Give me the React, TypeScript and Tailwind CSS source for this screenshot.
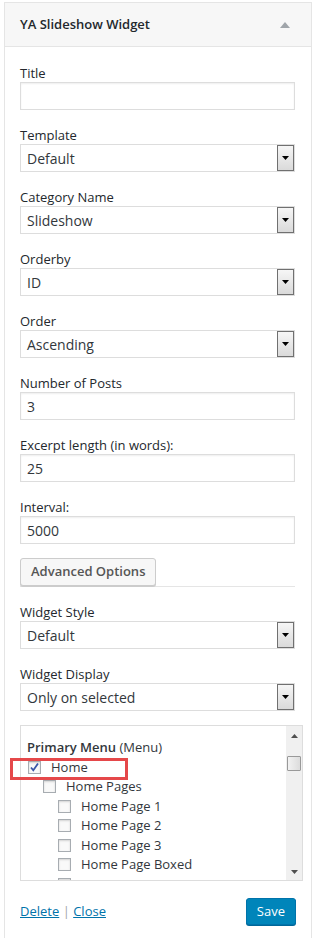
import React from "react";

const fields: { label: string; kind: "input" | "select"; value: string }[] = [
  { label: "Title", kind: "input", value: "" },
  { label: "Template", kind: "select", value: "Default" },
  { label: "Category Name", kind: "select", value: "Slideshow" },
  { label: "Orderby", kind: "select", value: "ID" },
  { label: "Order", kind: "select", value: "Ascending" },
  { label: "Number of Posts", kind: "input", value: "3" },
  { label: "Excerpt length (in words):", kind: "input", value: "25" },
  { label: "Interval:", kind: "input", value: "5000" },
];

// last row is cut off by the box edge, only its checkbox peeks in
const menuItems: { label: string; depth: number; checked?: boolean }[] = [
  { label: "Home", depth: 0, checked: true },
  { label: "Home Pages", depth: 1 },
  { label: "Home Page 1", depth: 2 },
  { label: "Home Page 2", depth: 2 },
  { label: "Home Page 3", depth: 2 },
  { label: "Home Page Boxed", depth: 2 },
  { label: "", depth: 2 },
];

export default function App() {
  return (
    <div className="min-h-[938px] bg-white font-['Open_Sans',sans-serif] text-[13px] text-[#23282d]">
      <div className="relative ml-[4px] mt-[2px] w-[308px] border-x border-t border-[#e5e5e5] bg-white">
        {/* Header */}
        <div className="flex h-[44px] items-center justify-between border-b border-[#e5e5e5] bg-[#f7f7f7] pl-[15px] pr-[21px]">
          <h3 className="text-[13px] font-semibold text-[#23282d]">YA Slideshow Widget</h3>
          <svg width="10" height="6" viewBox="0 0 10 6">
            <path d="M0 6 L5 0 L10 6 Z" fill="#a0a5aa" />
          </svg>
        </div>

        <div className="pl-[15px] pr-[16px] pt-[17px]">
          <div className="flex flex-col gap-[16px]">
            {fields.map((f) => (
              <Field key={f.label} label={f.label}>
                {f.kind === "input" ? <TextBox value={f.value} /> : <SelectBox value={f.value} />}
              </Field>
            ))}
          </div>

          {/* Advanced options */}
          <div className="mt-[14px] flex border-b border-[#e5e5e5]">
            <button className="h-[28px] rounded-[3px] border border-[#ccc] bg-[#f7f7f7] px-[10px] text-[13px] font-semibold text-[#555] shadow-[0_1px_0_#ccc]">
              Advanced Options
            </button>
          </div>

          <div className="mt-[16px] flex flex-col gap-[16px]">
            <Field label="Widget Style">
              <SelectBox value="Default" />
            </Field>
            <Field label="Widget Display">
              <SelectBox value="Only on selected" />
            </Field>
          </div>

          {/* Menu checklist */}
          <div className="mt-[14px] flex h-[156px] w-[283px] overflow-hidden border border-[#ddd] bg-white">
            <div className="flex-1 overflow-hidden pl-[6px] pt-[12px] text-[13px] leading-[19.5px] text-[#32373c]">
              <div>
                <span className="font-semibold">Primary Menu</span> (Menu)
              </div>
              {menuItems.map((m, i) => (
                <div key={i} className="flex h-[19.5px] items-center" style={{ paddingLeft: 1 + m.depth * 15 }}>
                  <Checkbox checked={m.checked} />
                  <span className="ml-[10px]">{m.label}</span>
                </div>
              ))}
            </div>
            <Scrollbar />
          </div>

          {/* Footer */}
          <div className="mt-[17px] flex items-center justify-between pb-[14px]">
            <div className="text-[13px] text-[#a0a5aa]">
              <a className="text-[#0073aa] underline">Delete</a> |{" "}
              <a className="text-[#0073aa] underline">Close</a>
            </div>
            <button className="mr-[-1px] h-[27px] rounded-[3px] border border-[#0073aa] bg-[#0085ba] px-[10px] text-[13px] text-white shadow-[0_1px_0_#006799]">
              Save
            </button>
          </div>
        </div>

        {/* Highlight annotation */}
        <div className="pointer-events-none absolute left-[5px] top-[755px] h-[22px] w-[118px] border-[3px] border-[#e5484a]" />
      </div>
    </div>
  );
}

function Field({ label, children }: { label: string; children: React.ReactNode }) {
  return (
    <div className="flex flex-col">
      <label className="text-[13px] leading-[18px] text-[#23282d]">{label}</label>
      {children}
    </div>
  );
}

function TextBox({ value }: { value: string }) {
  return (
    <div className="flex h-[28px] w-[275px] items-center border border-[#ddd] bg-white px-[6px] text-[14px] text-[#32373c] shadow-[inset_0_1px_2px_rgba(0,0,0,0.07)]">
      {value}
    </div>
  );
}

function SelectBox({ value }: { value: string }) {
  return (
    <div className="flex h-[28px] w-[275px] items-stretch border border-[#ddd] bg-white text-[14px] text-[#32373c]">
      <span className="flex flex-1 items-center pl-[6px]">{value}</span>
      <span className="flex w-[17px] items-center justify-center border border-[#707070] bg-gradient-to-b from-[#f6f6f6] to-[#dadada]">
        <svg width="7" height="4" viewBox="0 0 7 4">
          <path d="M0 0 L7 0 L3.5 4 Z" fill="#000" />
        </svg>
      </span>
    </div>
  );
}

function Checkbox({ checked }: { checked?: boolean }) {
  return (
    <span className="flex h-[13px] w-[13px] shrink-0 items-center justify-center border border-[#a7acb1] bg-[#f9f9f9] shadow-[inset_0_1px_2px_rgba(0,0,0,0.15)]">
      {checked && (
        <svg width="11" height="11" viewBox="0 0 11 11">
          <path d="M2 5.5 L4.3 8.3 L9 1.5" stroke="#3a55a8" strokeWidth="1.8" fill="none" />
        </svg>
      )}
    </span>
  );
}

function Scrollbar() {
  return (
    <div className="flex w-[16px] flex-col items-center bg-[#f0f0f0]">
      <svg className="mt-[8px]" width="7" height="4" viewBox="0 0 7 4">
        <path d="M0 4 L3.5 0 L7 4 Z" fill="#505050" />
      </svg>
      <div className="mt-[18px] h-[15px] w-[14px] rounded-[1px] border border-[#999] bg-gradient-to-r from-[#f2f2f2] to-[#dcdcdc]" />
      <div className="flex-1" />
      <svg className="mb-[6px]" width="7" height="4" viewBox="0 0 7 4">
        <path d="M0 0 L7 0 L3.5 4 Z" fill="#505050" />
      </svg>
    </div>
  );
}
